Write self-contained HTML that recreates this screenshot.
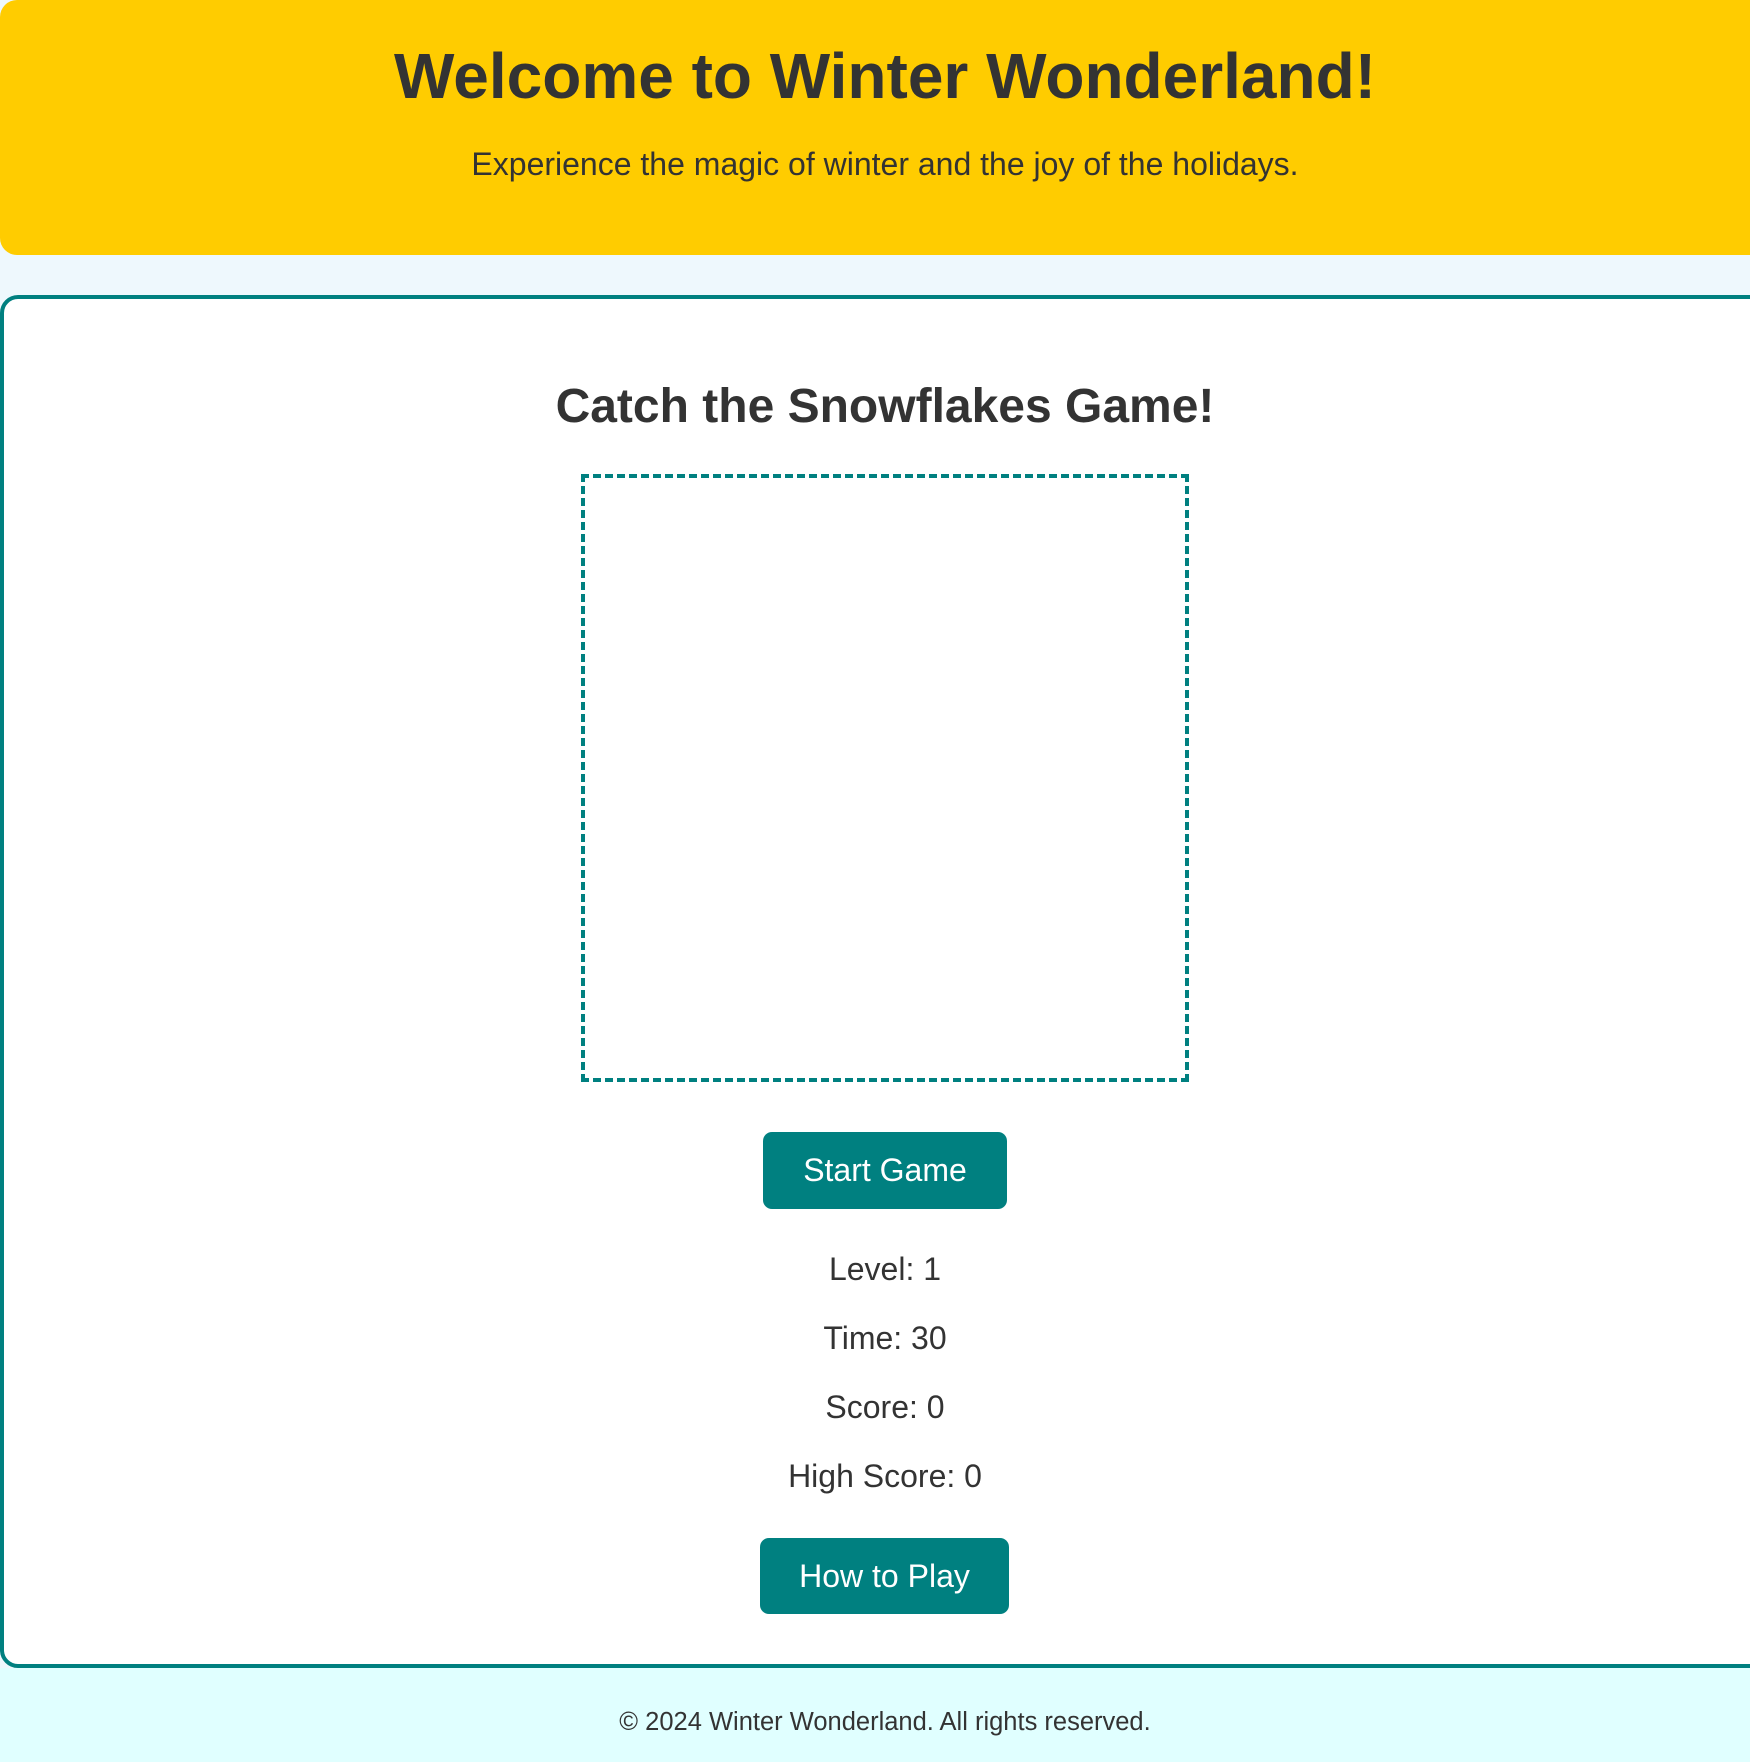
<!DOCTYPE html>
<html><head><meta charset="utf-8"><style>
html,body{margin:0;padding:0}
body{width:1750px;height:1762px;overflow:hidden;background:#eef8fd;font-family:"Liberation Sans",Arial,sans-serif;color:#333;position:relative}
.hdr{position:absolute;left:0;top:0;width:1770px;height:255px;background:#ffcc00;border-radius:17px;text-align:center}
.hdr h1{position:absolute;left:0;right:0;top:40px;margin:0;font-size:64px;font-weight:bold;line-height:72px}
.hdr p{position:absolute;left:0;right:0;top:145px;margin:0;font-size:32px;line-height:38px}
.main{position:absolute;left:0;top:295px;width:1762px;height:1365px;border:4px solid #008080;border-radius:18px;background:#fff}
.c{position:absolute;left:0;width:1770px;text-align:center}
h2{margin:0;font-size:48px;font-weight:bold;line-height:56px}
.box{position:absolute;left:581px;top:474px;width:600px;height:600px;border:4px dashed #008080}
.btn{position:absolute;background:#008080;color:#fff;border-radius:9px;font-size:32px;text-align:center}
.s{font-size:32px;line-height:38px}
.foot{position:absolute;left:0;top:1668px;width:1750px;height:94px;background:#e0ffff}
</style></head><body>
<div class="hdr"><h1>Welcome to Winter Wonderland!</h1><p>Experience the magic of winter and the joy of the holidays.</p></div>
<div class="main"></div>
<div class="c" style="top:379px"><h2>Catch the Snowflakes Game!</h2></div>
<div class="box"></div>
<div class="btn" style="left:763px;top:1132px;width:244px;height:77px;line-height:77px">Start Game</div>
<div class="c s" style="top:1250px">Level: 1</div>
<div class="c s" style="top:1319px">Time: 30</div>
<div class="c s" style="top:1388px">Score: 0</div>
<div class="c s" style="top:1457px">High Score: 0</div>
<div class="btn" style="left:760px;top:1538px;width:249px;height:76px;line-height:76px">How to Play</div>
<div class="foot"></div>
<div class="c" style="top:1707px;font-size:25.5px;line-height:30px">© 2024 Winter Wonderland. All rights reserved.</div>
</body></html>
